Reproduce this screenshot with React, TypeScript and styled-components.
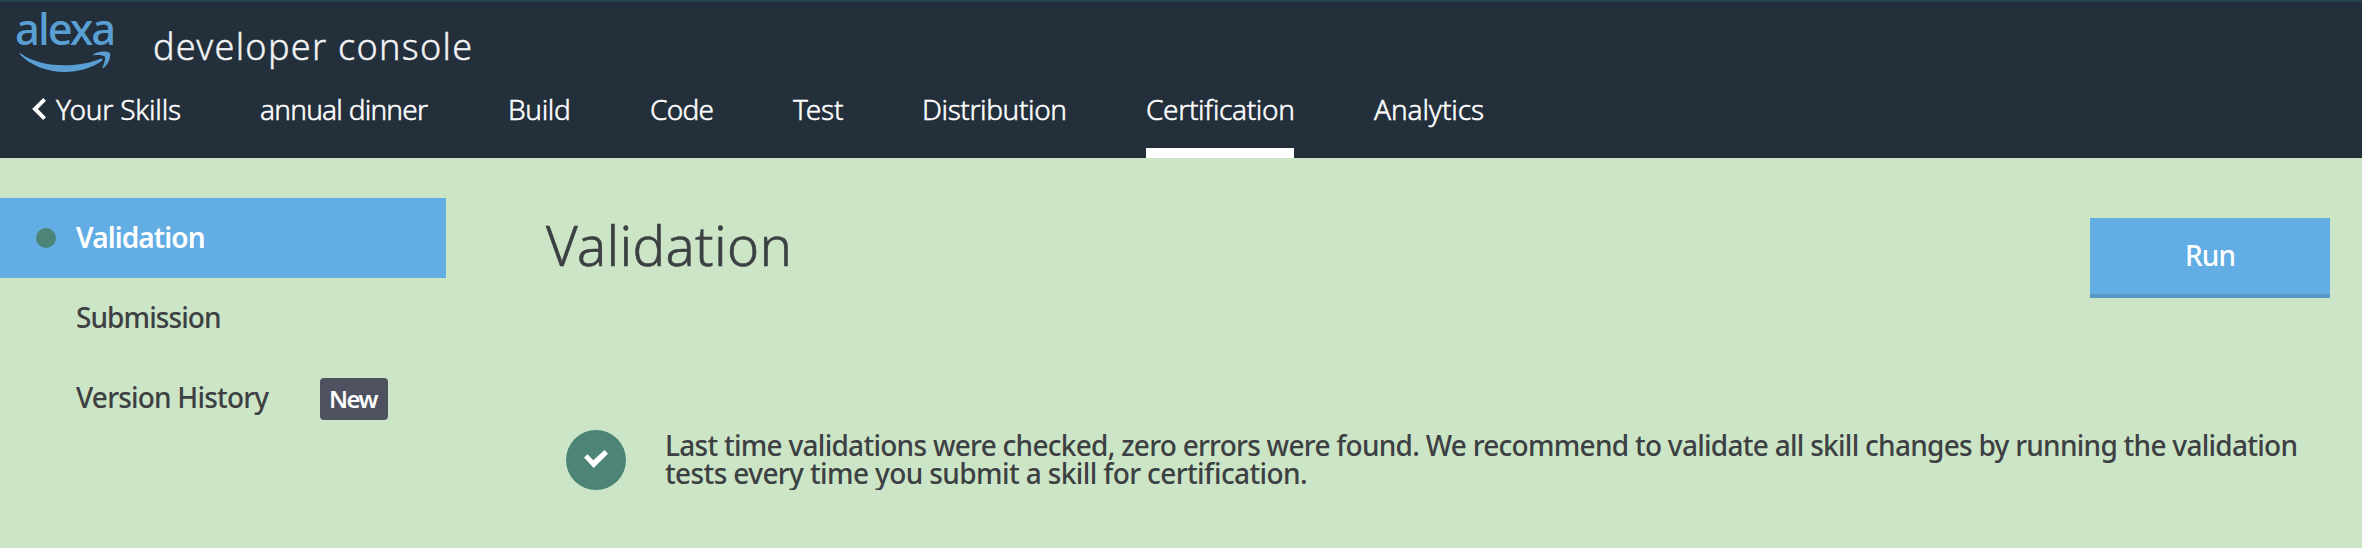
import React from 'react';
import styled, { createGlobalStyle } from 'styled-components';

const GlobalStyle = createGlobalStyle`
  * { box-sizing: border-box; }
  body {
    margin: 0;
    background: #cce5c6;
    color: #3c4043;
    font-family: "Noto Sans", "Open Sans", sans-serif;
    font-feature-settings: "liga" 1;
  }
`;
const Header = styled.header`
  height: 158px;
  background: #232f3b;
  border-top: 2px solid #25414e;
  color: #fff;
`;
const Brand = styled.div`
  display: flex;
  height: 72px;
  padding-left: 15px;
`;
const Logo = styled.div`
  width: 138px;
  padding-top: 6px;
  color: #5a9fd3;
  svg { display: block; margin: 2px 0 0 4px; }
`;
const LogoWord = styled.div`
  font-size: 43.5px;
  font-weight: 500;
  line-height: 40px;
  letter-spacing: -2px;
`;
const ConsoleName = styled.div`
  padding-top: 25px;
  font-size: 36px;
  font-weight: 300;
  line-height: 40px;
  letter-spacing: 1.3px;
  color: #f2f3f4;
  -webkit-text-stroke: 0.4px currentColor;
`;
const Nav = styled.nav`
  display: flex;
  gap: 80px;
  padding-left: 32px;
`;
const Tab = styled.a<{ $width: number; $spacing: number; $active?: boolean }>`
  display: flex;
  align-items: center;
  width: ${p => p.$width}px;
  height: 84px;
  padding-bottom: 4px;
  border-bottom: 10px solid ${p => (p.$active ? '#fff' : 'transparent')};
  font-size: 28px;
  font-weight: 300;
  letter-spacing: ${p => p.$spacing}px;
  white-space: nowrap;
  -webkit-text-stroke: 0.5px currentColor;
  svg { flex: none; margin-right: 10px; }
`;
const Page = styled.div`
  display: flex;
  padding: 40px 32px 0 0;
`;
const Sidebar = styled.aside`
  width: 446px;
`;
const SideItem = styled.a<{ $spacing: number; $active?: boolean }>`
  display: flex;
  align-items: center;
  height: 80px;
  padding: 0 0 2px 76px;
  font-size: 28px;
  font-weight: 500;
  letter-spacing: ${p => p.$spacing}px;
  white-space: nowrap;
  ${p => p.$active && 'padding-left: 36px; background: #62ade3; color: #fff; font-weight: 600;'}
`;
const Dot = styled.span`
  width: 20px;
  height: 20px;
  margin: 2px 20px 0 0;
  border-radius: 50%;
  background: #4c8577;
`;
const Badge = styled.span`
  width: 68px;
  height: 42px;
  margin: 4px 58px 0 auto;
  padding-left: 9px;
  border-radius: 4px;
  background: #4e5160;
  color: #fff;
  font-size: 24px;
  font-weight: 600;
  line-height: 41px;
  letter-spacing: -1.6px;
`;
const Main = styled.main`
  flex: 1;
  padding: 20px 0 0 100px;
`;
const TitleRow = styled.div`
  display: flex;
  justify-content: space-between;
`;
const Title = styled.h1`
  margin: 0;
  font-size: 54.5px;
  font-weight: 300;
  line-height: 54px;
  letter-spacing: 0.33px;
  -webkit-text-stroke: 0.6px currentColor;
`;
const RunButton = styled.button`
  width: 240px;
  height: 80px;
  padding: 0 0 2px;
  border: 0;
  border-bottom: 4px solid #5797c5;
  background: #62ade3;
  color: #fff;
  font: 500 28px "Noto Sans", sans-serif;
  letter-spacing: -0.9px;
`;
const Notice = styled.div`
  display: flex;
  margin-top: 132px;
  padding-left: 20px;
`;
const StatusIcon = styled.svg`
  flex: none;
  margin-right: 39px;
`;
const Message = styled.p`
  margin: 1px 0 0;
  font-size: 28px;
  font-weight: 500;
  line-height: 28px;
`;
const Line = styled.span<{ $spacing: number }>`
  display: block;
  white-space: nowrap;
  letter-spacing: ${p => p.$spacing}px;
`;

const tabs = [
  { label: 'annual dinner', width: 168, spacing: -0.75 },
  { label: 'Build', width: 62, spacing: -0.35 },
  { label: 'Code', width: 63, spacing: -0.75 },
  { label: 'Test', width: 49, spacing: -0.2 },
  { label: 'Distribution', width: 144, spacing: -0.4 },
  { label: 'Certification', width: 148, spacing: -0.35, active: true },
  { label: 'Analytics', width: 110, spacing: -0.1 },
];

export default function App() {
  return (
    <>
      <GlobalStyle />
      <Header>
        <Brand>
          <Logo>
            <LogoWord>alexa</LogoWord>
            <svg width="93" height="23" viewBox="19 50 93 23" fill="currentColor">
              <path d="M20.5 53.3C33 62.5 49 65.3 66 65.3C78 65.3 90 63 100.5 58.8C102.3 58 103.3 60 101.8 61C92 68 78 72 64.5 72C47 72 31 65.5 20 54.5C19.3 53.5 19.8 52.8 20.5 53.3Z" />
              <path d="M93.5 54.3C97 52 103 51 107.5 52C110 52.5 110.3 53.3 110.2 55C110 60 107.5 65 103.8 67.8C102.8 68.5 102.3 68 102.7 67C104 63.8 105.5 59.5 105 57C103.5 55 98 54.9 94 55.3C92.8 55.4 92.6 54.9 93.5 54.3Z" />
            </svg>
          </Logo>
          <ConsoleName>developer console</ConsoleName>
        </Brand>
        <Nav>
          <Tab $width={148} $spacing={-0.18}>
            <svg width="14" height="22" viewBox="0 0 14 22" fill="none" stroke="#fff" strokeWidth="4">
              <path d="M12.6 1.4L3 11L12.6 20.6" />
            </svg>
            Your Skills
          </Tab>
          {tabs.map(t => (
            <Tab key={t.label} $width={t.width} $spacing={t.spacing} $active={t.active}>{t.label}</Tab>
          ))}
        </Nav>
      </Header>
      <Page>
        <Sidebar>
          <SideItem $spacing={-0.9} $active><Dot />Validation</SideItem>
          <SideItem $spacing={-0.92}>Submission</SideItem>
          <SideItem $spacing={-0.8}>Version History<Badge>New</Badge></SideItem>
        </Sidebar>
        <Main>
          <TitleRow>
            <Title>Validation</Title>
            <RunButton>Run</RunButton>
          </TitleRow>
          <Notice>
            <StatusIcon width="60" height="60" viewBox="0 0 60 60">
              <circle cx="30" cy="30" r="30" fill="#4c8577" />
              <path d="M18 27.5L21.5 24.3L27.3 30.2L38.5 20L42 23.7L27.7 38Z" fill="#fff" />
            </StatusIcon>
            <Message>
              <Line $spacing={-0.725}>Last time validations were checked, zero errors were found. We recommend to validate all skill changes by running the validation</Line>
              <Line $spacing={-0.61}>tests every time you submit a skill for certification.</Line>
            </Message>
          </Notice>
        </Main>
      </Page>
    </>
  );
}
